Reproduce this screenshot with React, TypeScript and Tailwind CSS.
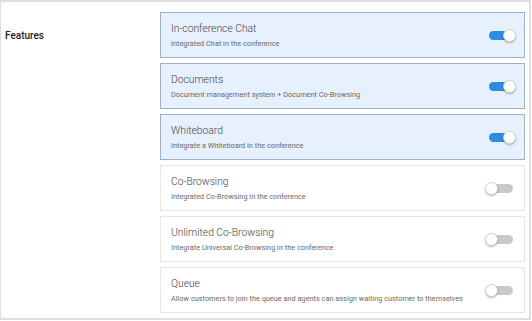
import React, { useState } from 'react';

interface Feature {
  title: string;
  description: string;
  enabled: boolean;
}

const initialFeatures: Feature[] = [
  { title: 'In-conference Chat', description: 'Integrated Chat in the conference', enabled: true },
  { title: 'Documents', description: 'Document management system + Document Co-Browsing', enabled: true },
  { title: 'Whiteboard', description: 'Integrate a Whiteboard in the conference', enabled: true },
  { title: 'Co-Browsing', description: 'Integrated Co-Browsing in the conference', enabled: false },
  { title: 'Unlimited Co-Browsing', description: 'Integrate Universal Co-Browsing in the conference', enabled: false },
  { title: 'Queue', description: 'Allow customers to join the queue and agents can assign waiting customer to themselves', enabled: false },
];

const Switch: React.FC<{ on: boolean; onToggle: () => void }> = ({ on, onToggle }) => (
  <button onClick={onToggle} className="relative w-[31px] h-[14px] shrink-0">
    <span
      className={`absolute left-[4px] top-[2.5px] w-[24px] h-[9px] rounded-full ${
        on ? 'bg-[#2f8ae6]' : 'bg-[#c9c9c9]'
      }`}
    />
    <span
      className={`absolute top-[0.5px] w-[13px] h-[13px] rounded-full bg-white border border-[#d4d4d4] shadow-[0_1px_2px_rgba(0,0,0,0.3)] ${
        on ? 'right-0' : 'left-0'
      }`}
    />
  </button>
);

export default function App() {
  const [features, setFeatures] = useState(initialFeatures);

  const toggle = (i: number) => {
    setFeatures(features.map((f, idx) => (idx === i ? { ...f, enabled: !f.enabled } : f)));
  };

  return (
    <div className="w-[532px] h-[321px] bg-white font-['Roboto',sans-serif]">
      <div className="w-[531px] h-[320px] border-2 border-l border-[#dedede] flex pt-[10px] pr-[4px]">
        {/* Label column */}
        <div className="w-[159px] h-[46px] flex items-center pl-[4px]">
          <span className="text-[10px] font-medium text-[#222]">Features</span>
        </div>

        {/* Feature cards */}
        <div className="flex-1 flex flex-col gap-[5px]">
          {features.map((f, i) => (
            <div
              key={f.title}
              className={`h-[46px] flex items-center justify-between pl-[10px] pr-[8px] border ${
                f.enabled ? 'bg-[#e7f0fd] border-[#9fb0cc]' : 'bg-white border-[#e6e6e6]'
              }`}
            >
              <div className="flex flex-col">
                <span className="text-[10.3px] leading-[14px] font-light text-[#444]">{f.title}</span>
                <span className="text-[7.35px] leading-[10px] mt-[3px] text-[#6a6a6a]">{f.description}</span>
              </div>
              <Switch on={f.enabled} onToggle={() => toggle(i)} />
            </div>
          ))}
        </div>
      </div>
    </div>
  );
}
